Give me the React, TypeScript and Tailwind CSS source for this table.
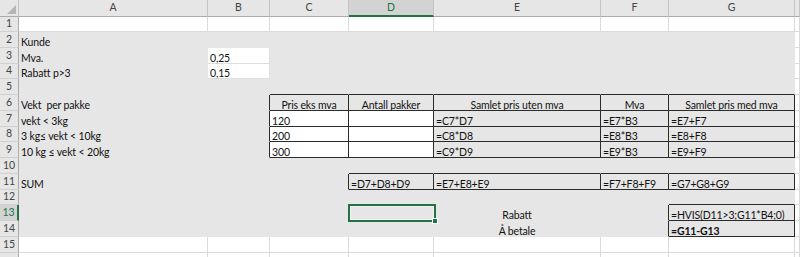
import React from "react";

type Cell = { t: string; center?: boolean; bold?: boolean };

const LETTERS = ["", "A", "B", "C", "D", "E", "F", "G", ""];
const ROWS = 16;
const COLS = 9;

const DATA: Record<string, Cell> = {
  "2,1": { t: "Kunde" },
  "3,1": { t: "Mva." },
  "3,2": { t: "0,25" },
  "4,1": { t: "Rabatt p>3" },
  "4,2": { t: "0,15" },
  "6,1": { t: "Vekt  per pakke" },
  "6,3": { t: "Pris eks mva", center: true },
  "6,4": { t: "Antall pakker", center: true },
  "6,5": { t: "Samlet pris uten mva", center: true },
  "6,6": { t: "Mva", center: true },
  "6,7": { t: "Samlet pris med mva", center: true },
  "7,1": { t: "vekt < 3kg" },
  "7,3": { t: "120" },
  "7,5": { t: "=C7*D7" },
  "7,6": { t: "=E7*B3" },
  "7,7": { t: "=E7+F7" },
  "8,1": { t: "3 kg≤ vekt < 10kg" },
  "8,3": { t: "200" },
  "8,5": { t: "=C8*D8" },
  "8,6": { t: "=E8*B3" },
  "8,7": { t: "=E8+F8" },
  "9,1": { t: "10 kg ≤ vekt < 20kg" },
  "9,3": { t: "300" },
  "9,5": { t: "=C9*D9" },
  "9,6": { t: "=E9*B3" },
  "9,7": { t: "=E9+F9" },
  "11,1": { t: "SUM" },
  "11,4": { t: "=D7+D8+D9" },
  "11,5": { t: "=E7+E8+E9" },
  "11,6": { t: "=F7+F8+F9" },
  "11,7": { t: "=G7+G8+G9" },
  "13,5": { t: "Rabatt", center: true },
  "13,7": { t: "=HVIS(D11>3;G11*B4;0)" },
  "14,5": { t: "Å betale", center: true },
  "14,7": { t: "=G11-G13", bold: true },
};

// cells framed with thin black borders
function boxed(r: number, c: number) {
  if (r >= 6 && r <= 9 && c >= 3 && c <= 7) return true;
  if (r === 11 && c >= 4 && c <= 7) return true;
  if ((r === 13 || r === 14) && c === 7) return true;
  return false;
}

type Fill = "gray" | "white" | "none";

function fillOf(r: number, c: number): Fill {
  if (c < 1 || c > 7 || r < 2 || r > 14) return "none";
  if ((r === 3 || r === 4) && c === 2) return "white";
  if (r >= 7 && r <= 9 && (c === 3 || c === 4)) return "white";
  return "gray";
}

function bgClass(f: Fill) {
  if (f === "gray") return "bg-[#e7e6e6]";
  return "bg-white";
}

function rightClass(r: number, c: number, f: Fill) {
  if (boxed(r, c) || boxed(r, c + 1)) return "border-r-[#2b2b2b]";
  if (f === "gray") return "border-r-[#e7e6e6]";
  if (f === "white") return "border-r-[#dedede]";
  return "border-r-[#dadada]";
}

function bottomClass(r: number, c: number, f: Fill) {
  if (boxed(r, c) || boxed(r + 1, c)) return "border-b-[#2b2b2b]";
  if (f === "gray") return "border-b-[#e7e6e6]";
  if (f === "white") return "border-b-[#dedede]";
  return "border-b-[#dadada]";
}

function ColumnHeader({ c }: { c: number }) {
  if (c === 0) {
    return (
      <div className="relative bg-[#e6e6e6] border-r border-b border-r-[#c4c4c4] border-b-[#ababab]">
        <svg className="absolute right-[2px] bottom-[2px]" width="9" height="9" viewBox="0 0 9 9">
          <polygon points="9,0 9,9 0,9" fill="#b5b5b5" />
        </svg>
      </div>
    );
  }
  if (c === 4) {
    return (
      <div className="flex items-center justify-center bg-[#d3d3d3] text-[#217346] border-r border-b-2 border-r-[#c4c4c4] border-b-[#217346]">
        {LETTERS[c]}
      </div>
    );
  }
  return (
    <div className="flex items-center justify-center bg-[#e6e6e6] text-[#444444] border-r border-b border-r-[#c4c4c4] border-b-[#ababab]">
      {LETTERS[c]}
    </div>
  );
}

function RowHeader({ r }: { r: number }) {
  if (r === 13) {
    return (
      <div className="flex items-center justify-center bg-[#d3d3d3] text-[#217346] border-r-2 border-b border-r-[#217346] border-b-[#d0d0d0]">
        {r}
      </div>
    );
  }
  return (
    <div className="flex items-center justify-center bg-[#e6e6e6] text-[#444444] border-r border-b border-r-[#ababab] border-b-[#d0d0d0]">
      {r === 16 ? "" : r}
    </div>
  );
}

function DataCell({ r, c }: { r: number; c: number }) {
  const f = fillOf(r, c);
  const cell = DATA[`${r},${c}`];
  const active = r === 13 && c === 4;
  return (
    <div
      className={`flex items-end whitespace-pre border-r border-b ${active ? "relative" : ""} ${bgClass(f)} ${rightClass(
        r,
        c,
        f
      )} ${bottomClass(r, c, f)} ${cell?.center ? "justify-center" : "pl-[2px]"}`}
    >
      {cell && (
        <span className={`leading-[10px] tracking-[-0.15px] text-[#111111] ${cell.bold ? "font-bold" : ""}`}>{cell.t}</span>
      )}
      {active && (
        <div className="absolute z-10 -left-[1px] -top-[1px] w-[88px] h-[18px] border-2 border-[#217346]">
          <div className="absolute inset-0 border border-[#f4f4f4]" />
          <div className="absolute -right-[4px] -bottom-[4px] w-[6px] h-[6px] bg-[#217346] border border-white" />
        </div>
      )}
    </div>
  );
}

export default function App() {
  const rows = Array.from({ length: ROWS + 1 }, (_, r) => r);
  const cols = Array.from({ length: COLS }, (_, c) => c);
  return (
    <div className="w-[800px] h-[257px] overflow-hidden bg-white font-[Lato,sans-serif] text-[10.5px]">
      <div className="grid grid-cols-[19px_189px_62px_79px_85px_167px_68px_126px_1fr] grid-rows-[17px_15px_16px_16px_15px_16px_16px_16px_15px_16px_16px_16px_15px_16px_16px_16px_16px]">
        {rows.map((r) =>
          cols.map((c) => {
            if (r === 0) return <ColumnHeader key={`${r}-${c}`} c={c} />;
            if (c === 0) return <RowHeader key={`${r}-${c}`} r={r} />;
            return <DataCell key={`${r}-${c}`} r={r} c={c} />;
          })
        )}
      </div>
    </div>
  );
}
